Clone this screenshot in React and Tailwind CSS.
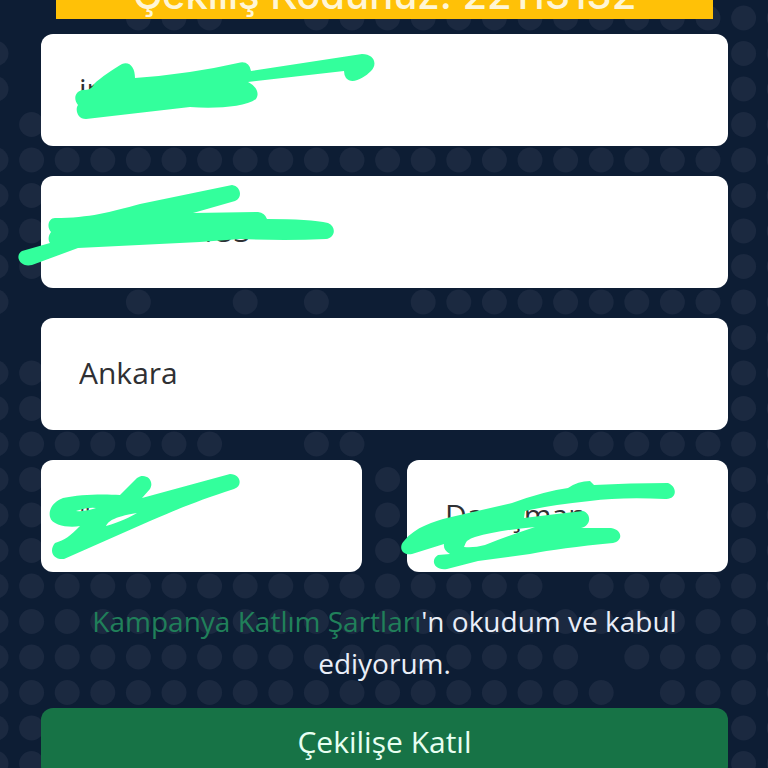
// App.jsx - raffle entry form
import React, { useState } from 'react'

// One string per row of the backdrop, "o" is a dot and "." is a gap
const DOT_ROWS = [
    '....ooo..oooooooooooooo',
    'o....................oo',
    'o....................oo',
    '.o...................oo',
    'ooooooooooooooooooooooo',
    'oo...................oo',
    'oo...................oo',
    'oo...................oo',
    'o...o..o.o..ooooooooooo',
    '.....................oo',
    'oo...................oo',
    'oo...................oo',
    'ooooooo..oo.....ooooooo',
    'oo.........o.........oo',
    'oo.........o.........oo',
    'oo.........o.........oo',
    'oooooooooooooooo.oooooo',
    'ooooooooooooooooooooooo',
    'ooooooooooooooooo.ooooo',
    'oooooooooooooooooo.oooo',
    'oo...................oo',
    'oo...................oo',
]

const SCRIBBLES = [
    'M83 90 C88 90 92 89 94 84 C100 78 115 68 122 64 C130 61 135 68 135 78 Q190 74 238 63 Q249 60 251 71 L362 54 C374 54 378 64 371 71 C364 78 352 85 346 78 Q344 75 344 71 L248 82 C256 86 260 93 256 99 C245 107 215 109 190 107 L86 119 C77 119 75 109 78 105 C73 99 75 91 83 90Z',
    'M55 218 C90 218 110 212 140 204 L232 185 C241 186 243 198 235 201 L193 213 L258 212 Q265 213 267 219 Q310 219 328 223 C337 227 335 238 326 239 Q285 241 240 239 L200 242 L78 248 L32 265 C20 268 14 256 22 251 L50 243 C48 240 48 236 51 232 C46 226 49 218 55 218Z',
    'M63 498 C80 494 105 494 120 495 L137 478 C145 472 155 480 150 489 L142 498 L230 474 C241 474 243 486 234 489 C200 500 180 508 150 521 L64 559 C52 560 49 550 55 543 C65 540 70 536 80 526 C70 528 52 526 50 517 C48 508 55 501 63 498Z M76 511 Q88 507 96 508 Q86 512 76 511Z M106 526 C108 522 112 517 137 513 C132 516 120 522 106 526Z',
    'M404 541 C415 527 435 521 447 518 L512 503 Q545 491 568 488 Q578 481 590 481 L594 485 Q630 483 668 483 C678 487 677 500 665 499 Q620 497 590 501 Q550 505 525 511 L524 518 Q555 514 583 511 C592 514 591 526 581 528 L611 528 C623 530 623 541 613 543 Q560 548 530 554 L478 561 L447 569 C434 571 430 560 438 555 L450 554 Q443 550 444 544 L412 554 C402 556 398 547 404 541Z M464 547 Q466 539 475 537 Q500 530 535 527 Q505 537 485 545 Q474 548 464 547Z',
]

function Backdrop() {
    return (
        <svg
            className="absolute inset-0 w-full h-full"
            viewBox="0 0 768 768"
            preserveAspectRatio="xMidYMin slice"
            aria-hidden="true"
        >
            {DOT_ROWS.map((row, r) =>
                [...row].map((cell, c) =>
                    cell === 'o' ? (
                        <circle key={`${r}-${c}`} cx={c * 35.6 - 4} cy={r * 35.5 + 18} r="12.5" fill="#1b2940" />
                    ) : null
                )
            )}
        </svg>
    )
}

function Scribbles() {
    return (
        <svg
            className="absolute inset-0 w-full h-full pointer-events-none"
            viewBox="0 0 768 768"
            preserveAspectRatio="xMidYMin slice"
            aria-hidden="true"
        >
            {SCRIBBLES.map((d) => (
                <path key={d} d={d} fill="#33ff9c" fillRule="evenodd" />
            ))}
        </svg>
    )
}

function Field({ label, name, value, onChange }) {
    return (
        <input
            type="text"
            name={name}
            aria-label={label}
            value={value}
            onChange={onChange}
            className="w-full h-28 px-[38px] pb-1 rounded-xl bg-white text-[30px] text-[#2f3033] outline-none"
        />
    )
}

function App() {
    const [form, setForm] = useState({
        name: 'in',
        phone: '0000000133',
        city: 'Ankara',
        age: '"',
        job: 'Danışman',
    })

    const handleChange = (e) => {
        setForm({ ...form, [e.target.name]: e.target.value })
    }

    return (
        <div className="relative h-screen overflow-hidden bg-[#0d1d34] font-['Open_Sans',sans-serif]">
            <Backdrop />

            <form className="relative pl-[41px] pr-10" onSubmit={(e) => e.preventDefault()}>
                {/* Raffle code banner, scrolled partly out of view */}
                <div className="mx-[15px] h-[19px] pb-1 flex items-end justify-center overflow-hidden bg-[#ffc107]">
                    <p className="text-[40px] leading-10 font-medium text-[#fff6d6] font-['Inter',sans-serif] whitespace-nowrap">
                        Çekiliş Kodunuz: 22113132
                    </p>
                </div>

                <div className="mt-[15px] flex flex-col gap-[30px]">
                    <Field label="Ad Soyad" name="name" value={form.name} onChange={handleChange} />
                    <Field label="Telefon" name="phone" value={form.phone} onChange={handleChange} />
                    <Field label="Şehir" name="city" value={form.city} onChange={handleChange} />
                    <div className="grid grid-cols-2 gap-[45px]">
                        <Field label="Yaş" name="age" value={form.age} onChange={handleChange} />
                        <Field label="Meslek" name="job" value={form.job} onChange={handleChange} />
                    </div>
                </div>

                <p className="mt-7 px-10 text-center text-[28px] leading-[42px] text-[#e9eef8]">
                    <a href="#sartlar" className="text-[#20805a]">Kampanya Katlım Şartları</a>'n okudum ve kabul ediyorum.
                </p>

                <button
                    type="submit"
                    className="mt-6 w-full h-[70px] pb-1 rounded-xl bg-[#177346] text-[30px] text-[#e8fff2]"
                >
                    Çekilişe Katıl
                </button>
            </form>

            <Scribbles />
        </div>
    )
}

export default App
